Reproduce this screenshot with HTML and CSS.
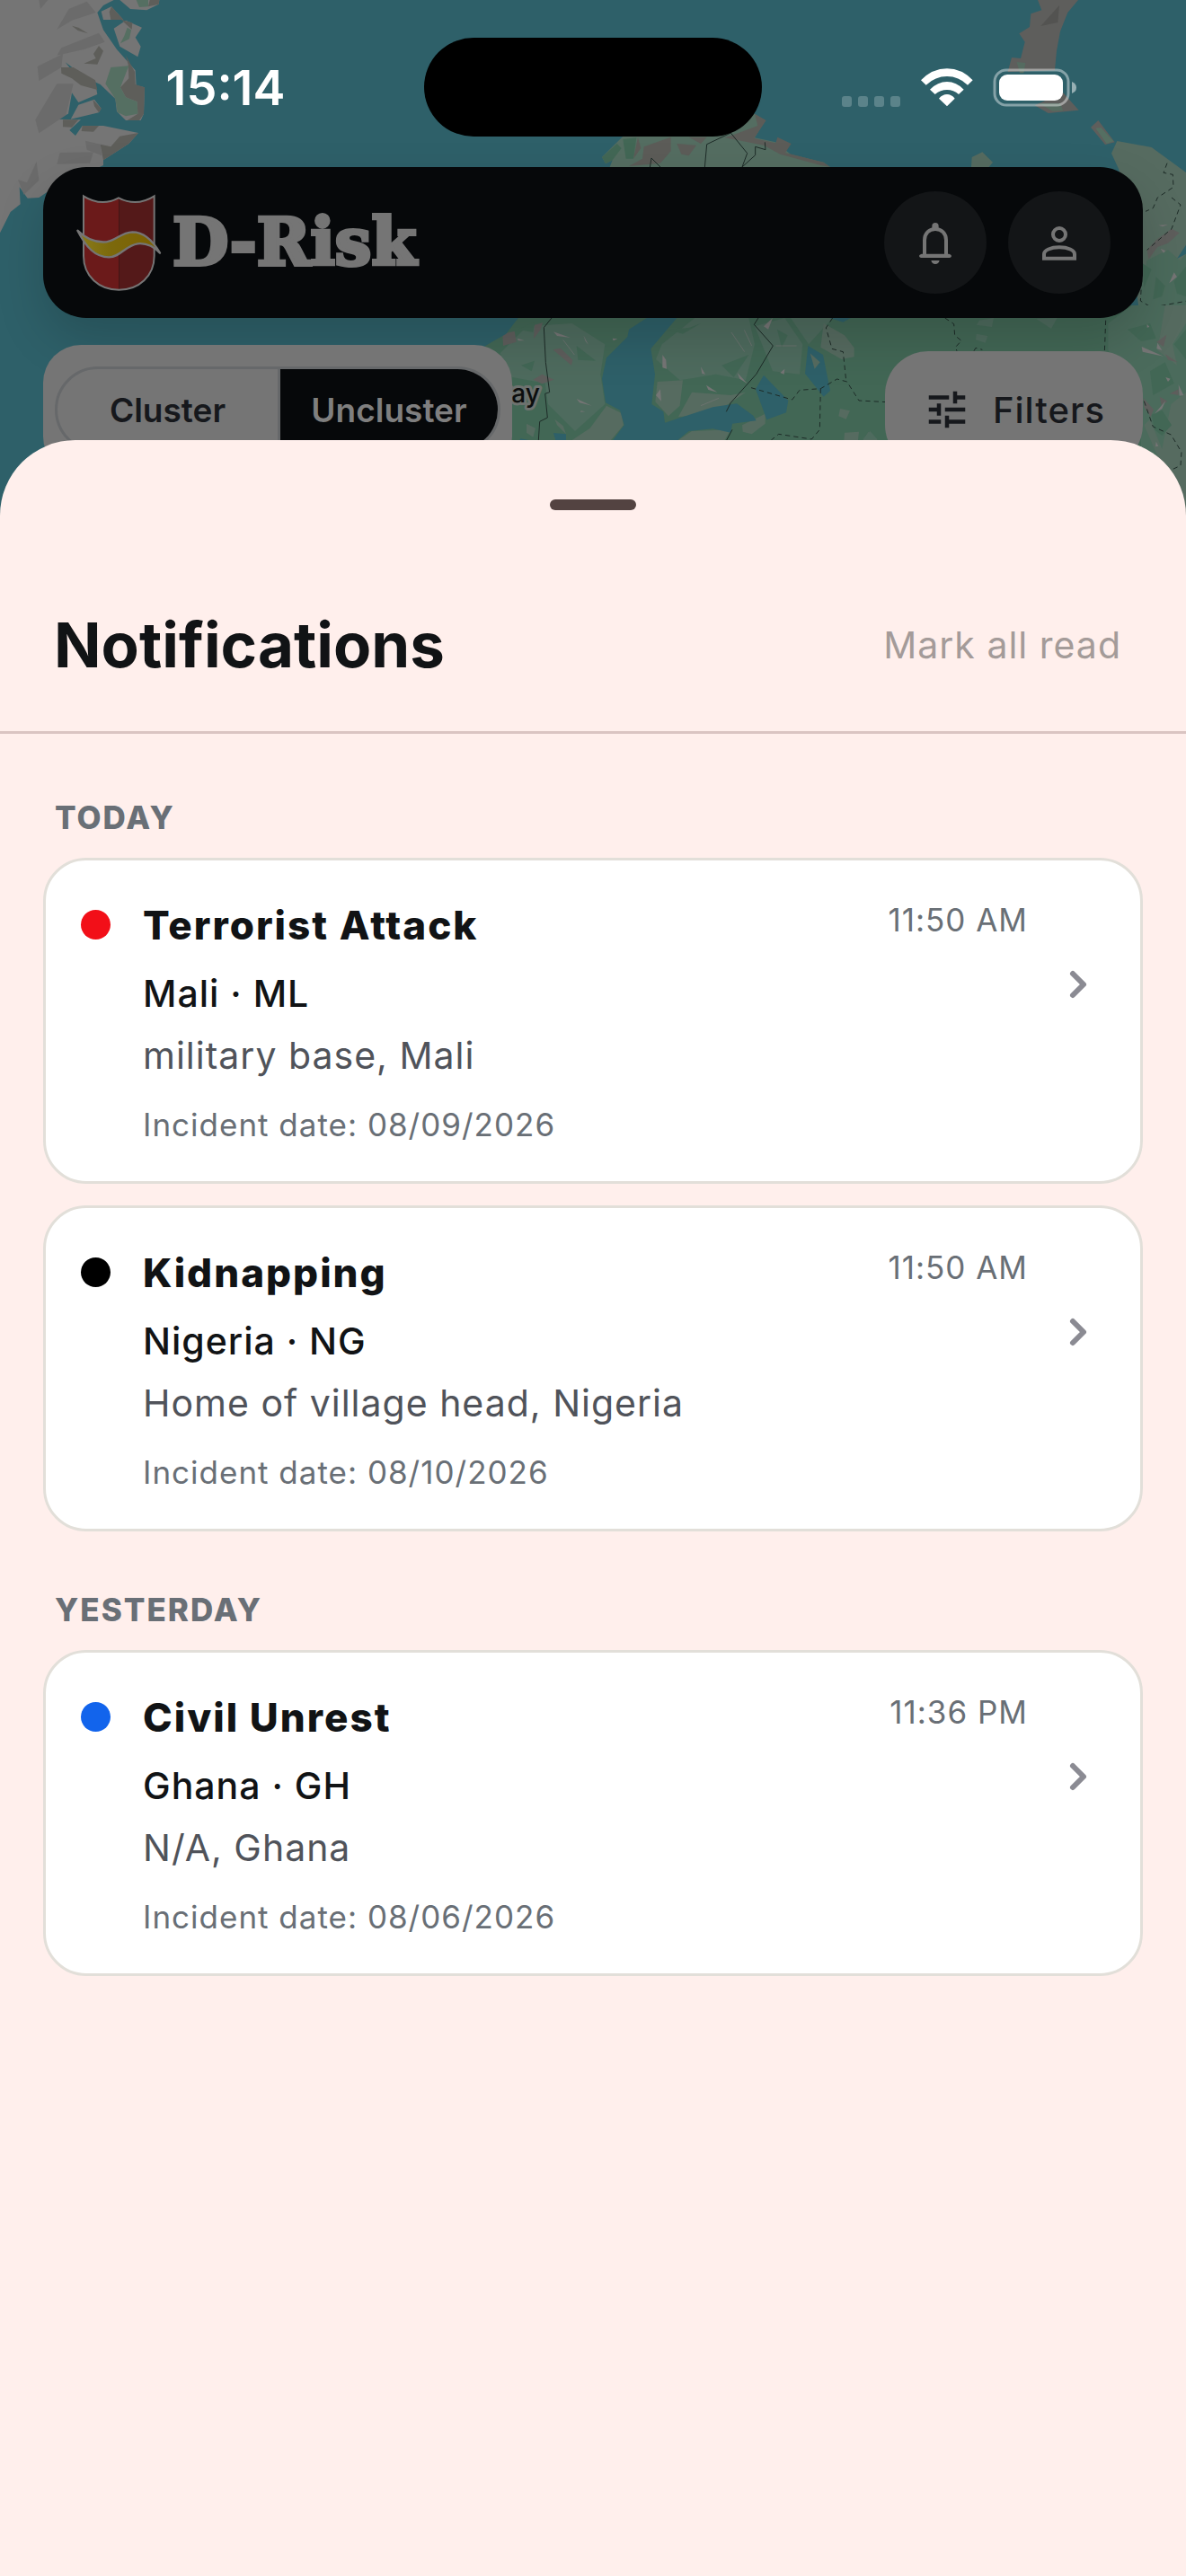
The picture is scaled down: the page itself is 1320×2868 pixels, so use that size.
FILE: index.html
```html
<!DOCTYPE html>
<html lang="en">
<head>
<meta charset="utf-8">
<meta name="viewport" content="width=device-width, initial-scale=1">
<title>D-Risk – Notifications</title>
<link rel="stylesheet" href="styles.css">
</head>
<body>
<div class="screen">
  <svg class="map" viewBox="0 0 1320 600" preserveAspectRatio="xMidYMin slice" aria-hidden="true">
    <rect width="1320" height="600" fill="#2e6069"/>
    <!-- north-west coast -->
    <g transform="scale(.33333)">
      <path fill="#757575" d="M0 0H380L345 18 325 42 345 100 390 165 452 235 455 285 483 292 480 380 470 402H420L390 372 385 330 335 282 290 262 218 208 262 262 320 285 325 315 262 342 240 310 228 380 190 398 270 400 232 435 252 453 275 420H345L462 444 430 480 345 535 345 552 160 640 130 660 92 662 65 625 68 682 35 708 0 778Z"/>
      <path fill="#757575" d="M262 350 315 332 338 362 330 376 236 398ZM338 38 372 22 412 66H345ZM380 95 420 68 474 92 452 125 470 155 460 190 400 155ZM400 0H532L530 14 490 34 435 30Z"/>
      <path fill="#5e5e5a" d="M372 22 412 66 370 66 365 40ZM405 66 442 76 440 98 420 80ZM420 185 450 240 452 282 483 292 480 380 465 402H425L460 380 458 340 420 325 402 292 430 262 428 215ZM462 444 430 480 345 535 335 482 370 490 400 455ZM275 420H330L312 440 272 438ZM204 225H245L318 268 325 300 270 285 240 262 205 245ZM330 153 345 170 325 215 280 212 320 195 312 180ZM210 400H262L240 425 210 424ZM310 332 338 362 330 376 315 355ZM240 86 262 92 294 112 260 102ZM500 0H532L530 14 495 22Z"/>
      <path fill="#6b6b6b" d="M125 222 210 180 205 225 130 270ZM190 280H245L220 385 130 445 118 400ZM230 30 290 5 320 42 240 68 190 98ZM205 160 330 110 350 140 280 165 190 185ZM122 540 130 602 80 650 60 600 90 610ZM200 510 312 508 300 545 190 548ZM285 470 335 482 340 520 290 500ZM130 0H160L135 30Z"/>
      <path fill="#556f62" d="M370 225 430 220 402 292 420 325 458 340 460 380 420 388 392 375 385 330 352 280ZM425 92 438 100 432 130 402 145 415 120ZM455 0H495V22L465 24Z"/>
    </g>
    <!-- arctic island on the right -->
    <g transform="translate(1100 0) scale(.33333)">
      <path fill="#5e5e5c" d="M165 0H300L265 42 240 105 228 170 222 235 65 240 78 192 108 195 122 140 103 112 138 90 142 46 178 34ZM155 352 250 310 302 368 200 378Z"/>
      <path fill="#535351" d="M237 18 232 75 175 87Z"/>
      <path fill="#556b60" d="M95 207 124 210 118 244 105 244ZM170 345H240L250 370 215 372Z"/>
      <path fill="#5e5e5c" d="M342 425 367 402 422 475 390 483Z"/>
      <path fill="#556f62" d="M358 428 376 426 418 472 395 480Z"/>
      <path fill="#566b60" d="M430 471 545 492 660 576V1080H510L436 566 411 512Z"/>
      <path fill="#4b6b5c" d="M530 870 600 835 640 870 660 850V1080H500L512 940Z"/>
      <path fill="#5e5e5c" d="M530 835 560 802 612 764 638 778 600 812 565 825 535 866Z"/>
      <path fill="#426755" d="M560 925 590 955 580 990 550 1000ZM620 940 660 890V990L630 980ZM515 880 545 900 520 960Z"/>
      <path fill="#757575" d="M568 752 600 750 582 757ZM604 946 620 910 630 925ZM575 830 592 838 585 845Z"/>
      <path fill="#2e6069" d="M660 818V848L630 864Z"/>
      <path class="border dashed" d="M597 545 585 577 616 583 618 625 565 660 550 695 525 706M612 660 642 684 612 764 530 835M512 940 508 1005 545 1027 660 1006"/>
    </g>
    <!-- north coast behind the status bar -->
    <g transform="translate(650 110) scale(.33333)">
      <path fill="#546d61" d="M60 195 105 150 130 125 560 45 605 72 570 130 640 145 690 185 800 212 825 230H85L95 205 72 217Z"/>
      <path fill="#426755" d="M60 195 110 150 125 165 95 205 72 217ZM130 135 175 130 165 200 140 200Z"/>
      <path fill="#5c5c58" d="M570 50 608 72 568 132 640 148 646 128 692 150 672 180 800 212 822 228 790 222 655 185 600 155 470 130 500 120 580 90ZM180 128 190 165 165 200ZM200 160 290 128V175L255 215 150 225 195 200ZM310 150 375 155 350 190 325 185ZM350 128H410L390 150Z"/>
      <path fill="#556b60" d="M1295 195 1330 178 1365 212 1350 230H1293Z"/>
      <path class="border" d="M403 230 410 152 490 114 545 182 528 228 572 188V160L606 170 604 145M220 230 225 198 255 228"/>
    </g>
    <!-- mainland between the bars -->
    <g transform="translate(540 340) scale(.33333)">
      <path fill="#426755" d="M0 135 60 95 110 42 240 0H2340V760H0Z"/>
      <path fill="#4e6b5e" d="M50 160 140 70 290 60 400 130 385 230 400 330 300 420 210 330 200 260 90 240ZM590 130 700 42H880L900 130 870 250 770 230 650 250 570 180ZM900 70 1000 42 1060 130 1050 230 960 220ZM1020 42H1160L1080 130Z"/>
      <path fill="#566b60" d="M575 255 660 250 650 335 612 370 568 322ZM690 290 820 300 870 290 760 365 645 372ZM405 335 455 360 462 400 420 450H290L350 410ZM645 450 690 420 820 415 800 450ZM858 400 935 362V395L890 430 860 422ZM1130 60 1200 100 1232 142V172L1190 180 1120 140ZM1185 345 1218 352 1205 380 1180 370ZM1200 425 1248 422 1245 450H1198ZM1280 422 1310 450H1262ZM138 395 168 410 160 440 138 425ZM232 380 260 402 270 430 240 400Z"/>
      <path fill="#426755" d="M120 200 165 185 155 220ZM305 135 370 185 310 182ZM610 80 680 75 720 60 660 95ZM790 200 880 165 830 240ZM975 80 1010 100 990 140ZM110 80 165 55 160 90Z"/>
      <path fill="#5e5e5c" d="M58 95 98 86 104 122 60 135ZM165 65 192 58 185 80 162 112ZM226 148 252 143 292 182 288 200ZM160 248 190 230 230 248 190 262Z"/>
      <path fill="#757575" d="M228 88 285 108 240 102ZM328 100 345 132 335 120ZM592 165 604 182 606 212 592 208ZM738 266 775 290 745 282ZM842 225 876 262 850 245ZM720 205 735 230 724 228ZM305 312 356 335 315 325ZM108 110 132 118 110 118ZM425 110 442 112 428 118ZM930 70 960 42 945 80ZM985 225 1000 212 998 230ZM570 300 585 280 588 320ZM320 352 334 355 318 356Z"/>
      <path fill="none" stroke="#757575" stroke-width="2" d="M260 115 298 165M822 90 866 155M865 82 890 135M780 310 720 335M970 135 1040 135"/>
      <path fill="#2e6069" d="M0 0H150L110 42 70 95 0 135ZM540 42 480 80 475 105 405 175 390 245 402 325 450 350 464 400 425 452H640L680 420 760 412 820 425 825 395 905 385 895 368 840 328 760 340 600 392 595 355 556 330 567 230 553 145 640 42ZM930 233 1012 318 1005 358 940 382 903 280ZM1078 135 1128 165 1152 285 1130 305 1068 228ZM1150 42H1220L1195 56ZM228 426 270 430V450H235ZM118 445 145 450H115Z"/>
      <path fill="#566b60" d="M1085 160 1118 190 1100 212Z"/>
      <path class="border" d="M222 42 196 74 202 190 215 290 200 295 208 375 182 388 178 450M912 42 898 64 961 135 905 230 820 325 805 355M825 415 805 452"/>
      <path class="border dashed" d="M888 275 1025 315 1050 283 1120 278 1175 246 1208 255 1248 318 1380 325M1160 42 1138 75 1158 145 1195 155 1205 250M1120 278 1117 415 1090 447 980 430 955 450"/>
    </g>
    <!-- eastern lowlands -->
    <g transform="translate(960 340) scale(.33333)">
      <path fill="#4b6b5c" d="M820 60 900 0H1080V720H930V300L820 150Z"/>
      <path fill="#566b60" d="M1010 0H1080V60L1035 130 1050 200 985 150ZM1030 330 1080 290V720L940 400 960 380 1000 480Z"/>
      <path fill="#426755" d="M885 80 960 60 980 110 930 120ZM960 220 1010 190 1040 260 970 300ZM965 365 1000 350 1032 400 1000 435 975 415ZM1040 130 1080 80V180Z"/>
      <path fill="#5e5e5c" d="M982 122 1015 98 1005 138ZM1010 162 1052 190 1020 182ZM938 310 972 348 962 372 940 340ZM992 305 1018 320 998 332ZM1025 295 1055 280V300Z"/>
      <path fill="#757575" d="M932 138 1005 170 935 155ZM985 125 1000 150 982 145ZM1012 240 1028 245 1020 255ZM1055 265 1072 300 1058 302ZM1012 318 975 362 1000 345ZM980 455 988 470 978 472ZM950 62 958 72 950 74Z"/>
      <path fill="#4e6b5e" d="M390 50 438 42 432 72 380 65ZM580 45 650 42 630 78ZM380 95 418 102 410 125 378 115ZM25 420 50 448H0Z"/>
      <path class="border dashed" d="M275 42 305 62 308 100 330 118 310 140 315 152M812 50 808 155M940 320 970 405 1030 432 1065 490 1062 535 1030 550M372 152 378 142 400 148"/>
    </g>
    <text class="map-label" x="546" y="448">way</text>
  </svg>

  <div class="statusbar">
    <span class="clock">15:14</span>
    <span class="island"></span>
    <span class="indicators">
      <svg width="66" height="12" viewBox="0 0 66 12" fill="#fff" fill-opacity=".22" aria-hidden="true"><rect width="11" height="12" rx="3"/><rect x="18" width="11" height="12" rx="3"/><rect x="36" width="11" height="12" rx="3"/><rect x="54" width="11" height="12" rx="3"/></svg>
      <svg class="wifi" width="58" height="43" viewBox="374 75 174 129" fill="#fff" aria-hidden="true"><path d="M374 115Q412 76 461 76T547 115L530 131Q500 102 461 102T391 131ZM404 146Q430 120 461 120T517 146L500 162Q483 147 461 147T421 162ZM434 176Q446 162 461 162T487 176L461 202Z"/></svg>
      <svg width="94" height="43" viewBox="0 0 94 43" aria-hidden="true"><rect x="2" y="2" width="82" height="39" rx="13" fill="none" stroke="#fff" stroke-opacity=".42" stroke-width="3"/><rect x="7" y="7" width="71" height="29" rx="9" fill="#fff"/><path d="M88 15q5 2 5 6.500t-5 6.500z" fill="#fff" fill-opacity=".5"/></svg>
    </span>
  </div>

  <header class="topbar">
    <a class="brand" href="#home">
      <svg width="96" height="108" viewBox="72 78 288 324" aria-hidden="true">
        <defs><linearGradient id="band" x1="0" x2="1"><stop offset="0" stop-color="#8a7d1b"/><stop offset=".4" stop-color="#7c690c"/><stop offset="1" stop-color="#7c6000"/></linearGradient></defs>
        <path fill="#6b1a1a" d="M99 87Q158 120 217 92V399C150 399 99 352 99 285Z"/>
        <path fill="#541919" d="M217 92Q276 120 335 87V285C335 352 284 399 217 399Z"/>
        <path fill="none" stroke="#757575" stroke-width="6" d="M99 85Q158 122 216 91Q276 122 335 85V285C335 352 284 398 217 398S99 352 99 285Z"/>
        <path fill="url(#band)" stroke="#757575" stroke-width="7" stroke-linejoin="round" d="M79 200C105 226 140 241 175 238C208 234 224 206 262 205C305 205 334 240 354 275C334 254 310 241 280 244C238 250 222 289 184 289C137 289 108 256 79 200Z"/>
      </svg>
      <span class="brand-name">D-Risk</span>
    </a>
    <div class="actions">
      <button class="round" type="button" aria-label="Notifications">
        <svg width="54" height="54" viewBox="342 579 162 162" aria-hidden="true"><path fill="none" stroke="#757575" stroke-width="12" d="M387 704V652C387 630 402 615 423 615S459 630 459 652V704"/><path fill="#757575" d="M412 614V605Q412 594 423 594T434 605V614ZM377 698H469Q477 700 477 705T471 711H375Q369 710 369 705T377 698ZM409 720H437Q434 732 423 732T409 720Z"/></svg>
      </button>
      <button class="round" type="button" aria-label="Profile">
        <svg width="54" height="54" viewBox="756 579 162 162" fill="none" stroke="#757575" stroke-width="12" aria-hidden="true"><circle cx="837" cy="633" r="21"/><path d="M786 713V699C786 686 808 676 837 676S888 686 888 699V713Z"/></svg>
      </button>
    </div>
  </header>

  <div class="controls">
    <div class="panel">
      <div class="segmented" role="group" aria-label="Marker grouping">
        <button class="segment" type="button" aria-pressed="false">Cluster</button>
        <button class="segment active" type="button" aria-pressed="true">Uncluster</button>
      </div>
    </div>
    <button class="filters" type="button">
      <svg width="54" height="54" viewBox="0 0 24 24" fill="#16181c" aria-hidden="true"><path d="M3 17v2h6v-2H3zM3 5v2h10V5H3zm10 16v-2h8v-2h-8v-2h-2v6h2zM7 9v2H3v2h4v2h2V9H7zm14 4v-2H11v2h10zm-6-4h2V7h4V5h-4V3h-2v6z"/></svg>
      Filters
    </button>
  </div>

  <main class="sheet">
    <div class="handle"></div>
    <div class="sheet-head">
      <h1>Notifications</h1>
      <button class="mark" type="button">Mark all read</button>
    </div>
    <div class="feed">
      <section class="group">
        <h2>Today</h2>
        <a class="card" href="#terrorist-attack">
          <span class="dot red"></span>
          <span class="details">
            <strong class="kind">Terrorist Attack</strong>
            <span class="country">Mali · ML</span>
            <span class="place">military base, Mali</span>
            <span class="date">Incident date: 08/09/2026</span>
          </span>
          <time class="time">11:50 AM</time>
          <svg class="chevron" viewBox="0 0 24 24" aria-hidden="true"><path d="M10 8l4 4-4 4"/></svg>
        </a>
        <a class="card" href="#kidnapping">
          <span class="dot black"></span>
          <span class="details">
            <strong class="kind">Kidnapping</strong>
            <span class="country">Nigeria · NG</span>
            <span class="place">Home of village head, Nigeria</span>
            <span class="date">Incident date: 08/10/2026</span>
          </span>
          <time class="time">11:50 AM</time>
          <svg class="chevron" viewBox="0 0 24 24" aria-hidden="true"><path d="M10 8l4 4-4 4"/></svg>
        </a>
      </section>
      <section class="group">
        <h2>Yesterday</h2>
        <a class="card" href="#civil-unrest">
          <span class="dot blue"></span>
          <span class="details">
            <strong class="kind">Civil Unrest</strong>
            <span class="country">Ghana · GH</span>
            <span class="place">N/A, Ghana</span>
            <span class="date">Incident date: 08/06/2026</span>
          </span>
          <time class="time">11:36 PM</time>
          <svg class="chevron" viewBox="0 0 24 24" aria-hidden="true"><path d="M10 8l4 4-4 4"/></svg>
        </a>
      </section>
    </div>
  </main>
</div>
</body>
</html>
```
FILE: styles.css
```css
:root {
  --ink: #111315;
  --muted: #696f76;
  --bar: #06080a;
  --dim: #757575;
  --sheet: #ffefec;
}

* { box-sizing: border-box; }

body {
  margin: 0;
  font-family: Inter, "Liberation Sans", sans-serif;
  color: var(--ink);
  background: var(--sheet);
}

button {
  font: inherit;
  color: inherit;
  letter-spacing: inherit;
  border: 0;
  padding: 0;
  background: none;
}

a { color: inherit; text-decoration: none; }

svg { flex: none; }

.screen {
  position: relative;
  display: flex;
  flex-direction: column;
  min-height: 100vh;
}

/* map backdrop */
.map {
  position: absolute;
  top: 0;
  left: 0;
  width: 100%;
  height: 600px;
}

.border { fill: none; stroke: #1d2b27; stroke-width: 3; }
.dashed { stroke-dasharray: 16 12; }

.map-label {
  font-size: 28px;
  font-weight: 500;
  fill: #0c0e0e;
  stroke: #6d726f;
  stroke-width: 6px;
  stroke-linejoin: round;
  paint-order: stroke;
}

/* status bar */
.statusbar {
  position: relative;
  display: grid;
  grid-template-columns: 1fr 376px 1fr;
  align-items: center;
  padding-top: 42px;
  color: #fff;
}

.clock {
  padding-left: 30px;
  text-align: center;
  font-size: 54px;
  font-weight: 600;
}

.island {
  height: 110px;
  border-radius: 55px;
  background: #000;
}

.indicators {
  display: flex;
  align-items: flex-end;
  padding-left: 89px;
  gap: 22px;
}

/* app bar */
.topbar {
  position: relative;
  display: flex;
  align-items: center;
  justify-content: space-between;
  margin: 34px 48px 0;
  padding: 27px 36px;
  border-radius: 48px;
  background: var(--bar);
  box-shadow: 0 24px 54px rgba(0, 0, 0, .16);
}

.brand {
  display: flex;
  align-items: center;
  gap: 12px;
}

.brand-name {
  font-family: "DejaVu Serif", serif;
  font-size: 72px;
  font-weight: 700;
  line-height: 84px;
  color: var(--dim);
  -webkit-text-stroke: 4px var(--dim);
}

.actions { display: flex; gap: 24px; }

.round {
  display: flex;
  align-items: center;
  justify-content: center;
  width: 114px;
  height: 114px;
  border-radius: 50%;
  background: #131517;
}

/* map controls */
.controls {
  position: relative;
  display: flex;
  align-items: center;
  justify-content: space-between;
  margin: 30px 48px 0;
}

.panel {
  padding: 24px 13px;
  border-radius: 42px;
  background: var(--dim);
}

.segmented {
  display: flex;
  height: 96px;
  overflow: hidden;
  border: 3px solid #66686a;
  border-radius: 48px;
  font-size: 37px;
  font-weight: 600;
  color: #16181c;
}

.segment { width: 245px; }

.segment.active {
  border-left: 3px solid #66686a;
  background: var(--bar);
  color: #7f7f7f;
}

.filters {
  display: flex;
  align-items: center;
  gap: 24px;
  height: 130px;
  padding: 0 42px;
  border-radius: 48px;
  background: var(--dim);
  font-size: 40px;
  font-weight: 500;
  letter-spacing: 1px;
  color: #16181c;
}

/* bottom sheet */
.sheet {
  position: relative;
  flex: 1;
  margin-top: -38px;
  padding: 66px 0 48px;
  border-radius: 84px 84px 0 0;
  background: var(--sheet);
}

.handle {
  width: 96px;
  height: 12px;
  margin: 0 auto;
  border-radius: 6px;
  background: #534341;
}

.sheet-head {
  display: flex;
  align-items: center;
  justify-content: space-between;
  margin-top: 108px;
  padding: 0 72px 54px 60px;
  border-bottom: 3px solid #dac4c2;
}

h1 {
  margin: 0;
  font-size: 69px;
  font-weight: 700;
  line-height: 84px;
}

.mark {
  font-size: 41px;
  font-weight: 400;
  letter-spacing: 1px;
  color: #a49b99;
}

.feed { padding: 72px 48px 0; }

.group { display: grid; gap: 24px; }
.group + .group { margin-top: 66px; }

h2 {
  margin: 0;
  padding-left: 13px;
  font-size: 35px;
  font-weight: 800;
  line-height: 42px;
  letter-spacing: 2px;
  text-transform: uppercase;
  color: var(--muted);
}

.card {
  display: flex;
  align-items: flex-start;
  padding: 42px 33px 39px 39px;
  border: 3px solid #e2dfd9;
  border-radius: 48px;
  background: #fff;
  letter-spacing: 1px;
}

.dot {
  flex: none;
  width: 33px;
  height: 33px;
  margin: 13px 36px 0 0;
  border-radius: 50%;
}

.red { background: #f20f18; }
.black { background: #000; }
.blue { background: #1264ec; }

.details {
  display: flex;
  flex: 1;
  flex-direction: column;
}

.kind {
  font-size: 44px;
  font-weight: 800;
  line-height: 60px;
  letter-spacing: 2px;
}

.country {
  margin-top: 16px;
  font-size: 41px;
  font-weight: 500;
  line-height: 60px;
}

.place {
  margin-top: 9px;
  font-size: 41px;
  line-height: 60px;
  color: #50535a;
}

.date {
  margin-top: 23px;
  font-size: 35px;
  line-height: 48px;
  color: var(--muted);
}

.time {
  font-size: 35px;
  line-height: 48px;
  color: var(--muted);
}

.chevron {
  width: 72px;
  height: 72px;
  margin: 60px 0 0 20px;
  fill: none;
  stroke: #8b8b93;
  stroke-width: 2;
  stroke-linecap: round;
  stroke-linejoin: round;
}
```
